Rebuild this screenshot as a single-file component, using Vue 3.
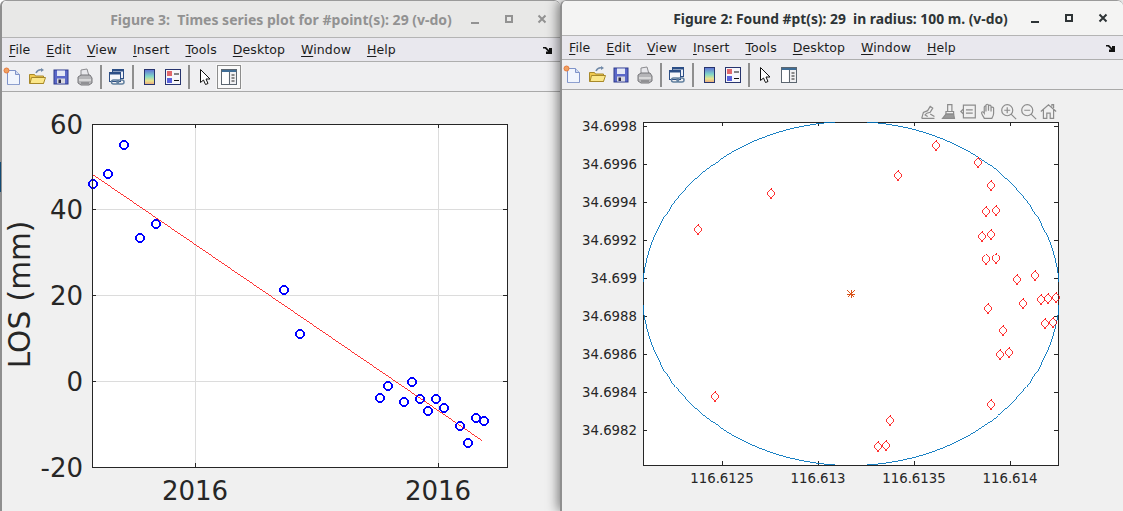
<script setup>
const menus = ['File', 'Edit', 'View', 'Insert', 'Tools', 'Desktop', 'Window', 'Help']
const tools = ['new', 'open', 'save', 'print', '|', 'link', '|', 'colorbar', 'legend', '|', 'pointer', 'plottools']

const ellipsePts = []
for (let i = 0; i <= 120; i++) {
  const a = (i / 120) * Math.PI * 2
  ellipsePts.push((851 + 208.5 * Math.cos(a)).toFixed(1) + ',' + (293.5 + 172 * Math.sin(a)).toFixed(1))
}

// coordinates are page pixels, each svg viewBox starts at its canvas corner
const timeSeries = [
  [93, 184], [108, 174], [124, 145], [140, 238], [156, 224], [284, 290], [300, 334],
  [380, 398], [388, 386], [404, 402], [412, 382], [420, 399], [428, 411], [436, 399],
  [444, 408], [460, 426], [468, 443], [476, 418], [484, 421]
]
const found = [
  [698, 229], [771, 193], [898, 175], [936, 145], [978, 162], [991, 185], [986, 211], [996, 210],
  [982, 236], [991, 234], [986, 259], [996, 258], [1017, 279], [1035, 275], [988, 308], [1023, 303],
  [1041, 299], [1048, 298], [1056, 297], [1003, 330], [1045, 323], [1053, 322], [1000, 354], [1009, 352],
  [991, 404], [715, 396], [890, 420], [878, 446], [886, 445]
]
const leftY = [['60', 124], ['40', 209.75], ['20', 295.5], ['0', 381.25], ['-20', 467]]
const leftX = [195, 438]
const rightY = [
  ['34.6998', 126], ['34.6996', 164], ['34.6994', 202], ['34.6992', 240], ['34.699', 278],
  ['34.6988', 316], ['34.6986', 354], ['34.6984', 392], ['34.6982', 430]
]
const rightX = [['116.6125', 722], ['116.613', 818], ['116.6135', 914], ['116.614', 1010]]

const windows = [
  { id: 'back', title: 'Figure 3:  Times series plot for #point(s): 29 (v-do)', box: '2 92 558 419', toggled: true },
  { id: 'front', title: 'Figure 2: Found #pt(s): 29  in radius: 100 m. (v-do)', box: '562 90 561 421', toggled: false }
]

function marker(p) {
  const [x, y] = p
  return `M${x - 1.5} ${y - 4}h3l2.500 2.500v3l-2.500 2.500h-3l-2.500-2.500v-3z`
}
</script>

<template>
  <div class="desktop">
    <span class="behind"></span>
    <section v-for="win in windows" :key="win.id" class="window" :class="win.id">
      <header class="titlebar">
        <span></span>
        <h1 class="title">{{ win.title }}</h1>
        <div class="controls">
          <svg width="14" height="14" viewBox="0 0 14 14"><path d="M3 11h8" stroke="currentColor" stroke-width="2" /></svg>
          <svg width="14" height="14" viewBox="0 0 14 14"><rect x="4" y="4" width="6" height="6" fill="none" stroke="currentColor" stroke-width="2" /></svg>
          <svg width="14" height="14" viewBox="0 0 14 14"><path d="M3.500 3.500l7 7M10.500 3.500l-7 7" stroke="currentColor" stroke-width="2" /></svg>
        </div>
      </header>

      <nav class="menubar">
        <span v-for="m in menus" :key="m" class="menu"><u>{{ m[0] }}</u>{{ m.slice(1) }}</span>
        <svg class="dock" width="10" height="10" viewBox="0 0 10 10"><path d="M0 2h3l3 3V3h3v6H3V6.500h2L2 3.500H0z" fill="#111" /></svg>
      </nav>

      <div class="toolbar">
        <template v-for="(t, i) in tools" :key="i">
          <span v-if="t === '|'" class="sep"></span>
          <span v-else class="tool" :class="{ on: t === 'plottools' && win.toggled }">
            <svg width="20" height="20" viewBox="0 0 20 20">
              <template v-if="t === 'new'">
                <path d="M4.500 3.500h8l4 4v10h-12z" fill="#f1f5fd" stroke="#7f93c9" />
                <path d="M12.500 3.500v4h4" fill="#cfdaf2" stroke="#7f93c9" />
                <path d="M15.500 17.500h-10" stroke="#8ea0cf" />
                <circle cx="3.500" cy="3.500" r="2.500" fill="#f0a060" stroke="#e67a3c" />
              </template>
              <template v-else-if="t === 'open'">
                <path d="M2.500 7.500h5l1 1.500h8v7.500h-14z" fill="#f0c94f" stroke="#a8892a" />
                <path d="M3 16.500l1.500-6h14l-2 6z" fill="#fbe78a" stroke="#a8892a" />
                <path d="M9 6c1.500-3 4-3.500 6-3" fill="none" stroke="#7189a8" stroke-width="1.500" />
                <path d="M14 1l3 2-3 2z" fill="#7189a8" />
              </template>
              <template v-else-if="t === 'save'">
                <rect x="3" y="3" width="14" height="14" fill="#5b68c8" stroke="#2e3a8c" />
                <rect x="6" y="3.500" width="8" height="5.500" fill="#e4e8f5" />
                <rect x="6" y="11.500" width="8" height="5" fill="#d9d9df" />
                <rect x="7.500" y="12.500" width="2.500" height="3.500" fill="#2b2b4a" />
              </template>
              <template v-else-if="t === 'print'">
                <path d="M6 9V3l6-1 2 7z" fill="#e8e8ec" stroke="#8b8b8f" />
                <path d="M3 10l3-2h9l2 3v5l-3 2H6l-3-2z" fill="#b5b5b8" stroke="#77777b" />
                <path d="M4 13h12" stroke="#e5e5e5" stroke-width="1.500" />
                <path d="M6 16h8" stroke="#6c6c70" />
              </template>
              <template v-else-if="t === 'link'">
                <rect x="5.500" y="2.500" width="11" height="9" fill="#eef1f8" stroke="#2d4f86" />
                <path d="M6 3.500h10" stroke="#2d4f86" stroke-width="2" />
                <rect x="2.500" y="5.500" width="11" height="9" fill="#f6f7fb" stroke="#2d4f86" />
                <path d="M3 6.500h10" stroke="#2d4f86" stroke-width="2" />
                <rect x="4.500" y="13" width="7" height="4" rx="2" fill="none" stroke="#62809f" stroke-width="1.500" />
                <rect x="10" y="13" width="7" height="4" rx="2" fill="none" stroke="#62809f" stroke-width="1.500" />
              </template>
              <template v-else-if="t === 'colorbar'">
                <defs>
                  <linearGradient :id="win.id + 'bar'" x1="0" y1="0" x2="0" y2="1">
                    <stop offset="0" stop-color="#5f6fd6" />
                    <stop offset=".45" stop-color="#7fd6c8" />
                    <stop offset=".75" stop-color="#e8e48e" />
                    <stop offset="1" stop-color="#eba77e" />
                  </linearGradient>
                </defs>
                <rect x="5.500" y="2.500" width="10" height="15" :fill="'url(#' + win.id + 'bar)'" stroke="#27346e" />
              </template>
              <template v-else-if="t === 'legend'">
                <rect x="2.500" y="2.500" width="15" height="15" fill="#f6f6fa" stroke="#27346e" />
                <rect x="4" y="4" width="5" height="5" fill="#e0686c" />
                <rect x="4" y="11" width="5" height="5" fill="#5a62dc" />
                <path d="M11 7h5M11 13.500h5" stroke="#111" />
              </template>
              <template v-else-if="t === 'pointer'">
                <path d="M5.500 2.500v13l3-2.500 2 4.500 2.500-1-2-4.500h4z" fill="#fff" stroke="#111" />
              </template>
              <template v-else>
                <rect x="2.500" y="2.500" width="15" height="15" fill="#f0f0f2" stroke="#5c6670" />
                <rect x="3" y="3" width="14" height="2" fill="#3f6d96" />
                <rect x="3" y="5" width="6.500" height="12" fill="#fff" />
                <path d="M10.500 5v12" stroke="#5c6670" />
                <path d="M12.500 8h3M12.500 11h3M12.500 14h3" stroke="#222" />
              </template>
            </svg>
          </span>
        </template>
      </div>

      <main class="canvas">
        <svg v-if="win.id === 'back'" class="plot" :viewBox="win.box">
          <rect x="92" y="124" width="415" height="343" fill="#fff" />
          <g stroke="#dcdcdc">
            <path v-for="x in leftX" :key="x" :d="`M${x} 124V467`" />
            <path v-for="y in leftY.slice(1, 4)" :key="y[0]" :d="`M92 ${y[1]}H507`" />
          </g>
          <g stroke="#262626">
            <path v-for="y in leftY" :key="y[0]" :d="`M92 ${y[1]}h4M507 ${y[1]}h-4`" />
            <path v-for="x in leftX" :key="x" :d="`M${x} 124v4M${x} 467v-4`" />
          </g>
          <path d="M92 174L482 440.500" stroke="#f00" stroke-width=".8" fill="none" />
          <path
            v-for="(p, i) in timeSeries"
            :key="i"
            :d="marker(p)"
            fill="none"
            stroke="#00f"
            stroke-width="2"
          />
          <rect x="92" y="124" width="415" height="343" fill="none" stroke="#262626" />
          <text v-for="y in leftY" :key="y[0]" class="big" x="83" :y="y[1] + 9.5" text-anchor="end">{{ y[0] }}</text>
          <text v-for="x in leftX" :key="x" class="big" :x="x" y="500" text-anchor="middle">2016</text>
          <text class="axis-label" text-anchor="middle" transform="translate(30 294.500) rotate(-90)">LOS (mm)</text>
        </svg>

        <svg v-else class="plot" :viewBox="win.box">
          <defs>
            <clipPath id="axes-clip"><rect x="643" y="122" width="416" height="343" /></clipPath>
          </defs>
          <rect x="643" y="122" width="415" height="343" fill="#fff" />
          <g stroke="#262626">
            <path v-for="y in rightY" :key="y[0]" :d="`M643 ${y[1]}h4M1058 ${y[1]}h-4`" />
            <path v-for="x in rightX" :key="x[0]" :d="`M${x[1]} 122v4M${x[1]} 465v-4`" />
          </g>
          <rect x="643" y="122" width="415" height="343" fill="none" stroke="#262626" />
          <polygon :points="ellipsePts.join(' ')" clip-path="url(#axes-clip)" fill="none" stroke="#0072bd" stroke-width=".9" />
          <path
            v-for="(p, i) in found"
            :key="i"
            :d="`M${p[0]} ${p[1] - 5.500}l4.300 5.500-4.300 5.500-4.300-5.500z`"
            fill="none"
            stroke="#f00"
            stroke-width=".8"
          />
          <path d="M847.500 290.500l7 7M854.500 290.500l-7 7M851 290v8M847 294h8" stroke="#d9541a" />
          <text v-for="y in rightY" :key="y[0]" class="small" x="637" :y="y[1] + 5" text-anchor="end">{{ y[0] }}</text>
          <text v-for="x in rightX" :key="x[0]" class="small" :x="x[1]" y="483" text-anchor="middle">{{ x[0] }}</text>
        </svg>

        <div v-if="win.id === 'front'" class="axes-tools">
          <svg viewBox="0 0 20 20"><path d="M2 18l2-7 5-2 3-5 3 2-3 5-4 1-2 2 3 2M2 18h15M12 13l5 3" /></svg>
          <svg viewBox="0 0 20 20"><path d="M9 2h5v8H9zM7 10h9v3H7z" /><path class="solid" d="M7 13l-4 5h14l-1-5z" /></svg>
          <svg viewBox="0 0 20 20"><path d="M4 2.500h14v15H4zM4 7l-3 3 3 3M7 8h8M7 12h8" /></svg>
          <svg viewBox="0 0 20 20"><path d="M5 18c-1-3-4-5-3-7s3 1 3 1V5c0-2 2-2 2 0V3c0-2 3-2 3 0v1c0-2 3-2 3 0v2c0-2 3-1 3 0v6c0 3-1 4-2 6zM7 5v5M10 4v5M13 5v5" /></svg>
          <svg viewBox="0 0 20 20"><circle cx="8.500" cy="8.500" r="6.500" /><path d="M13 13l6 6M8.500 5v7M5 8.500h7" /></svg>
          <svg viewBox="0 0 20 20"><circle cx="8.500" cy="8.500" r="6.500" /><path d="M13 13l6 6M5 8.500h7" /></svg>
          <svg viewBox="0 0 20 20"><path d="M1 10l9-8 9 8M4 8v10h4v-6h4v6h4V8M14 4V2h2v4" /></svg>
        </div>
      </main>
    </section>
  </div>
</template>

<style scoped>
.desktop {
  display: flex;
  position: relative;
  width: 1123px;
  height: 511px;
  overflow: hidden;
  background: #ffffff;
  font-family: "DejaVu Sans", sans-serif;
}

.behind {
  position: absolute;
  left: 0;
  top: 162px;
  width: 1px;
  height: 30px;
  background: #134a73;
  z-index: 2;
}

.window {
  display: flex;
  flex-direction: column;
  position: relative;
  height: 511px;
  box-sizing: border-box;
  border-top: 1px solid #9a9a9a;
  border-left: 2px solid #8f8f8f;
  border-radius: 6px 6px 0 0;
  overflow: hidden;
}

.window.back {
  width: 560px;
  --title-h: 36px;
}

.window.front {
  width: 563px;
  --title-h: 34px;
  box-shadow: -2px 0 12px rgba(0, 0, 0, 0.5);
  overflow: visible;
  z-index: 1;
}

.titlebar {
  display: grid;
  grid-template-columns: 1fr auto 1fr;
  align-items: center;
  height: var(--title-h);
  border-bottom: 1px solid #b4b4b4;
  box-sizing: content-box;
  border-radius: 6px 6px 0 0;
}

.back .titlebar {
  background: #e8e8e7;
  color: #929292;
}

.front .titlebar {
  background: #f4f4f3;
  color: #2e3436;
}

.title {
  margin: 0;
  font-family: "Noto Sans", sans-serif;
  font-size: 14px;
  font-weight: 700;
  white-space: pre;
}

.front .title {
  padding-right: 4px;
  font-size: 13.850px;
}

.controls {
  display: flex;
  justify-content: flex-end;
  gap: 19.5px;
  padding-right: 11px;
}

.front .controls {
  gap: 20px;
  padding-right: 13px;
}

.controls svg {
  display: block;
}

.menubar {
  display: flex;
  align-items: center;
  gap: 16px;
  height: 23px;
  padding-left: 7px;
  background: #e9e8ee;
  border-bottom: 1px solid #aeaeae;
  font-size: 12.500px;
  letter-spacing: 0.1px;
  color: #1c1c1c;
}

.menu u {
  text-decoration-thickness: 1px;
  text-underline-offset: 2px;
}

.dock {
  margin-left: auto;
  margin-right: 7px;
}

.toolbar {
  display: flex;
  align-items: center;
  height: 29px;
  padding-left: 0;
  background: #efeff1;
  border-bottom: 1px solid #a9a9a9;
}

.toolbar > :first-child {
  margin-left: -1px;
}

.tool {
  display: flex;
  align-items: center;
  justify-content: center;
  width: 24px;
  height: 24px;
  box-sizing: border-box;
}

.tool.on {
  background: #fafafa;
  border: 1px solid #8d8d8d;
  outline: 1px solid #f7f7f7;
}

.sep {
  width: 2px;
  height: 24px;
  margin: 0 3px;
  background: #8f8f8f;
}

.canvas {
  flex: 1;
  position: relative;
  background: #f0f0f0;
  min-height: 0;
}

.plot {
  display: block;
  width: 100%;
  height: 100%;
  shape-rendering: crispEdges;
}

.plot text {
  fill: #262626;
  font-family: "DejaVu Sans", sans-serif;
  shape-rendering: auto;
}

.plot .big {
  font-size: 26px;
}

.plot .axis-label {
  font-size: 29.600px;
}

.plot .small {
  font-size: 13.300px;
}

.axes-tools {
  position: absolute;
  top: 13px;
  right: 66px;
  display: flex;
  gap: 3px;
}

.axes-tools svg {
  width: 17px;
  height: 17px;
  fill: none;
  stroke: #8c8c8c;
  stroke-width: 1.400;
}

.axes-tools .solid {
  fill: #9a9a9a;
}
</style>

<style>
body {
  background: #ffffff;
}
</style>
